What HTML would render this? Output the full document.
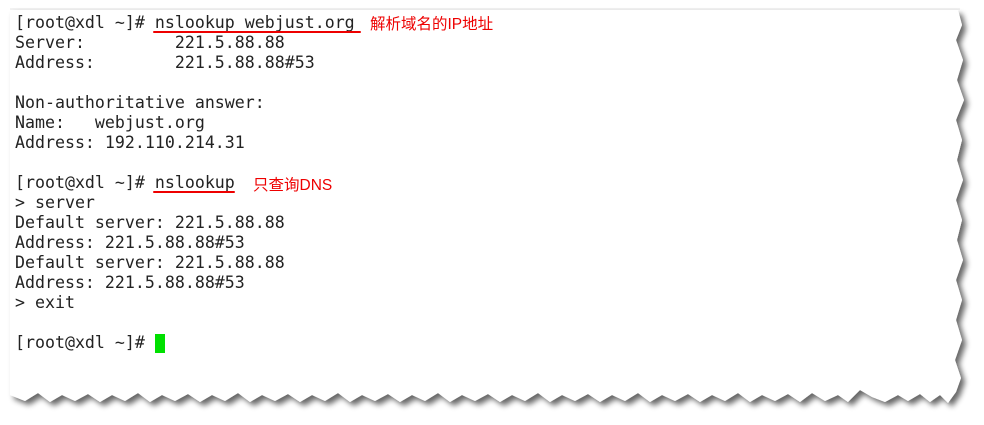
<!DOCTYPE html>
<html><head><meta charset="utf-8"><style>
html,body{margin:0;padding:0;background:#fff;width:984px;height:425px;overflow:hidden;position:relative}
svg{position:absolute;left:0;top:0}
.t{position:absolute;left:15px;top:13px;font-family:"DejaVu Sans Mono","Liberation Mono",monospace;font-size:16.6px;line-height:20px;color:#222;white-space:pre;margin:0}
.r{position:absolute;color:#e00;font-family:"Liberation Sans","Noto Sans CJK SC",sans-serif;font-size:15.5px}
.u{position:absolute;height:2px;background:#e00;border-radius:1px}
.cur{position:absolute;left:155px;top:334px;width:10px;height:19px;background:#00e000}
</style></head><body>
<svg width="984" height="425">
<defs><filter id="f" x="-5%" y="-5%" width="110%" height="115%"><feGaussianBlur in="SourceAlpha" stdDeviation="3"/><feOffset dx="4" dy="4"/><feComponentTransfer><feFuncA type="linear" slope="0.6"/></feComponentTransfer><feMerge><feMergeNode/><feMergeNode in="SourceGraphic"/></feMerge></filter></defs>
<line x1="10" y1="9" x2="960" y2="9" stroke="#e4e4e4" stroke-width="1"/>
<polygon filter="url(#f)" fill="#fff" points="10,10 958,10 962,25 956,40 963,60 957,80 964,100 956,120 962,140 957,160 963,180 956,200 962,220 957,240 963,260 956,280 962,300 956,320 962,340 955,360 961,378 956,392 948,403 940,395 930,402 920,394 908,401 898,395 885,402 872,397 860,390 848,402 838,395 825,401 812,393 800,402 788,394 775,401 762,395 750,402 738,393 725,401 712,395 700,402 688,394 675,401 662,395 650,402 638,393 625,401 612,395 600,402 588,394 575,401 562,395 550,402 538,393 525,401 512,395 500,402 488,394 475,401 462,395 450,402 438,393 425,401 412,395 400,402 388,394 375,401 362,395 350,402 338,393 325,401 312,395 300,402 288,394 275,401 262,395 250,402 238,393 225,401 212,395 200,402 188,394 175,401 162,395 150,402 138,393 125,401 112,395 100,402 88,394 75,401 62,395 50,402 38,393 25,401 10,395"/>
</svg>
<pre class="t">[root@xdl ~]# nslookup webjust.org
Server:         221.5.88.88
Address:        221.5.88.88#53

Non-authoritative answer:
Name:   webjust.org
Address: 192.110.214.31

[root@xdl ~]# nslookup
&gt; server
Default server: 221.5.88.88
Address: 221.5.88.88#53
Default server: 221.5.88.88
Address: 221.5.88.88#53
&gt; exit

[root@xdl ~]# </pre>
<div class="cur"></div>
<div class="u" style="left:153px;top:31px;width:208px"></div>
<div class="r" style="left:370px;top:12px">解析域名的IP地址</div>
<div class="u" style="left:153px;top:191px;width:82px"></div>
<div class="r" style="left:253px;top:173px">只查询DNS</div>
</body></html>
